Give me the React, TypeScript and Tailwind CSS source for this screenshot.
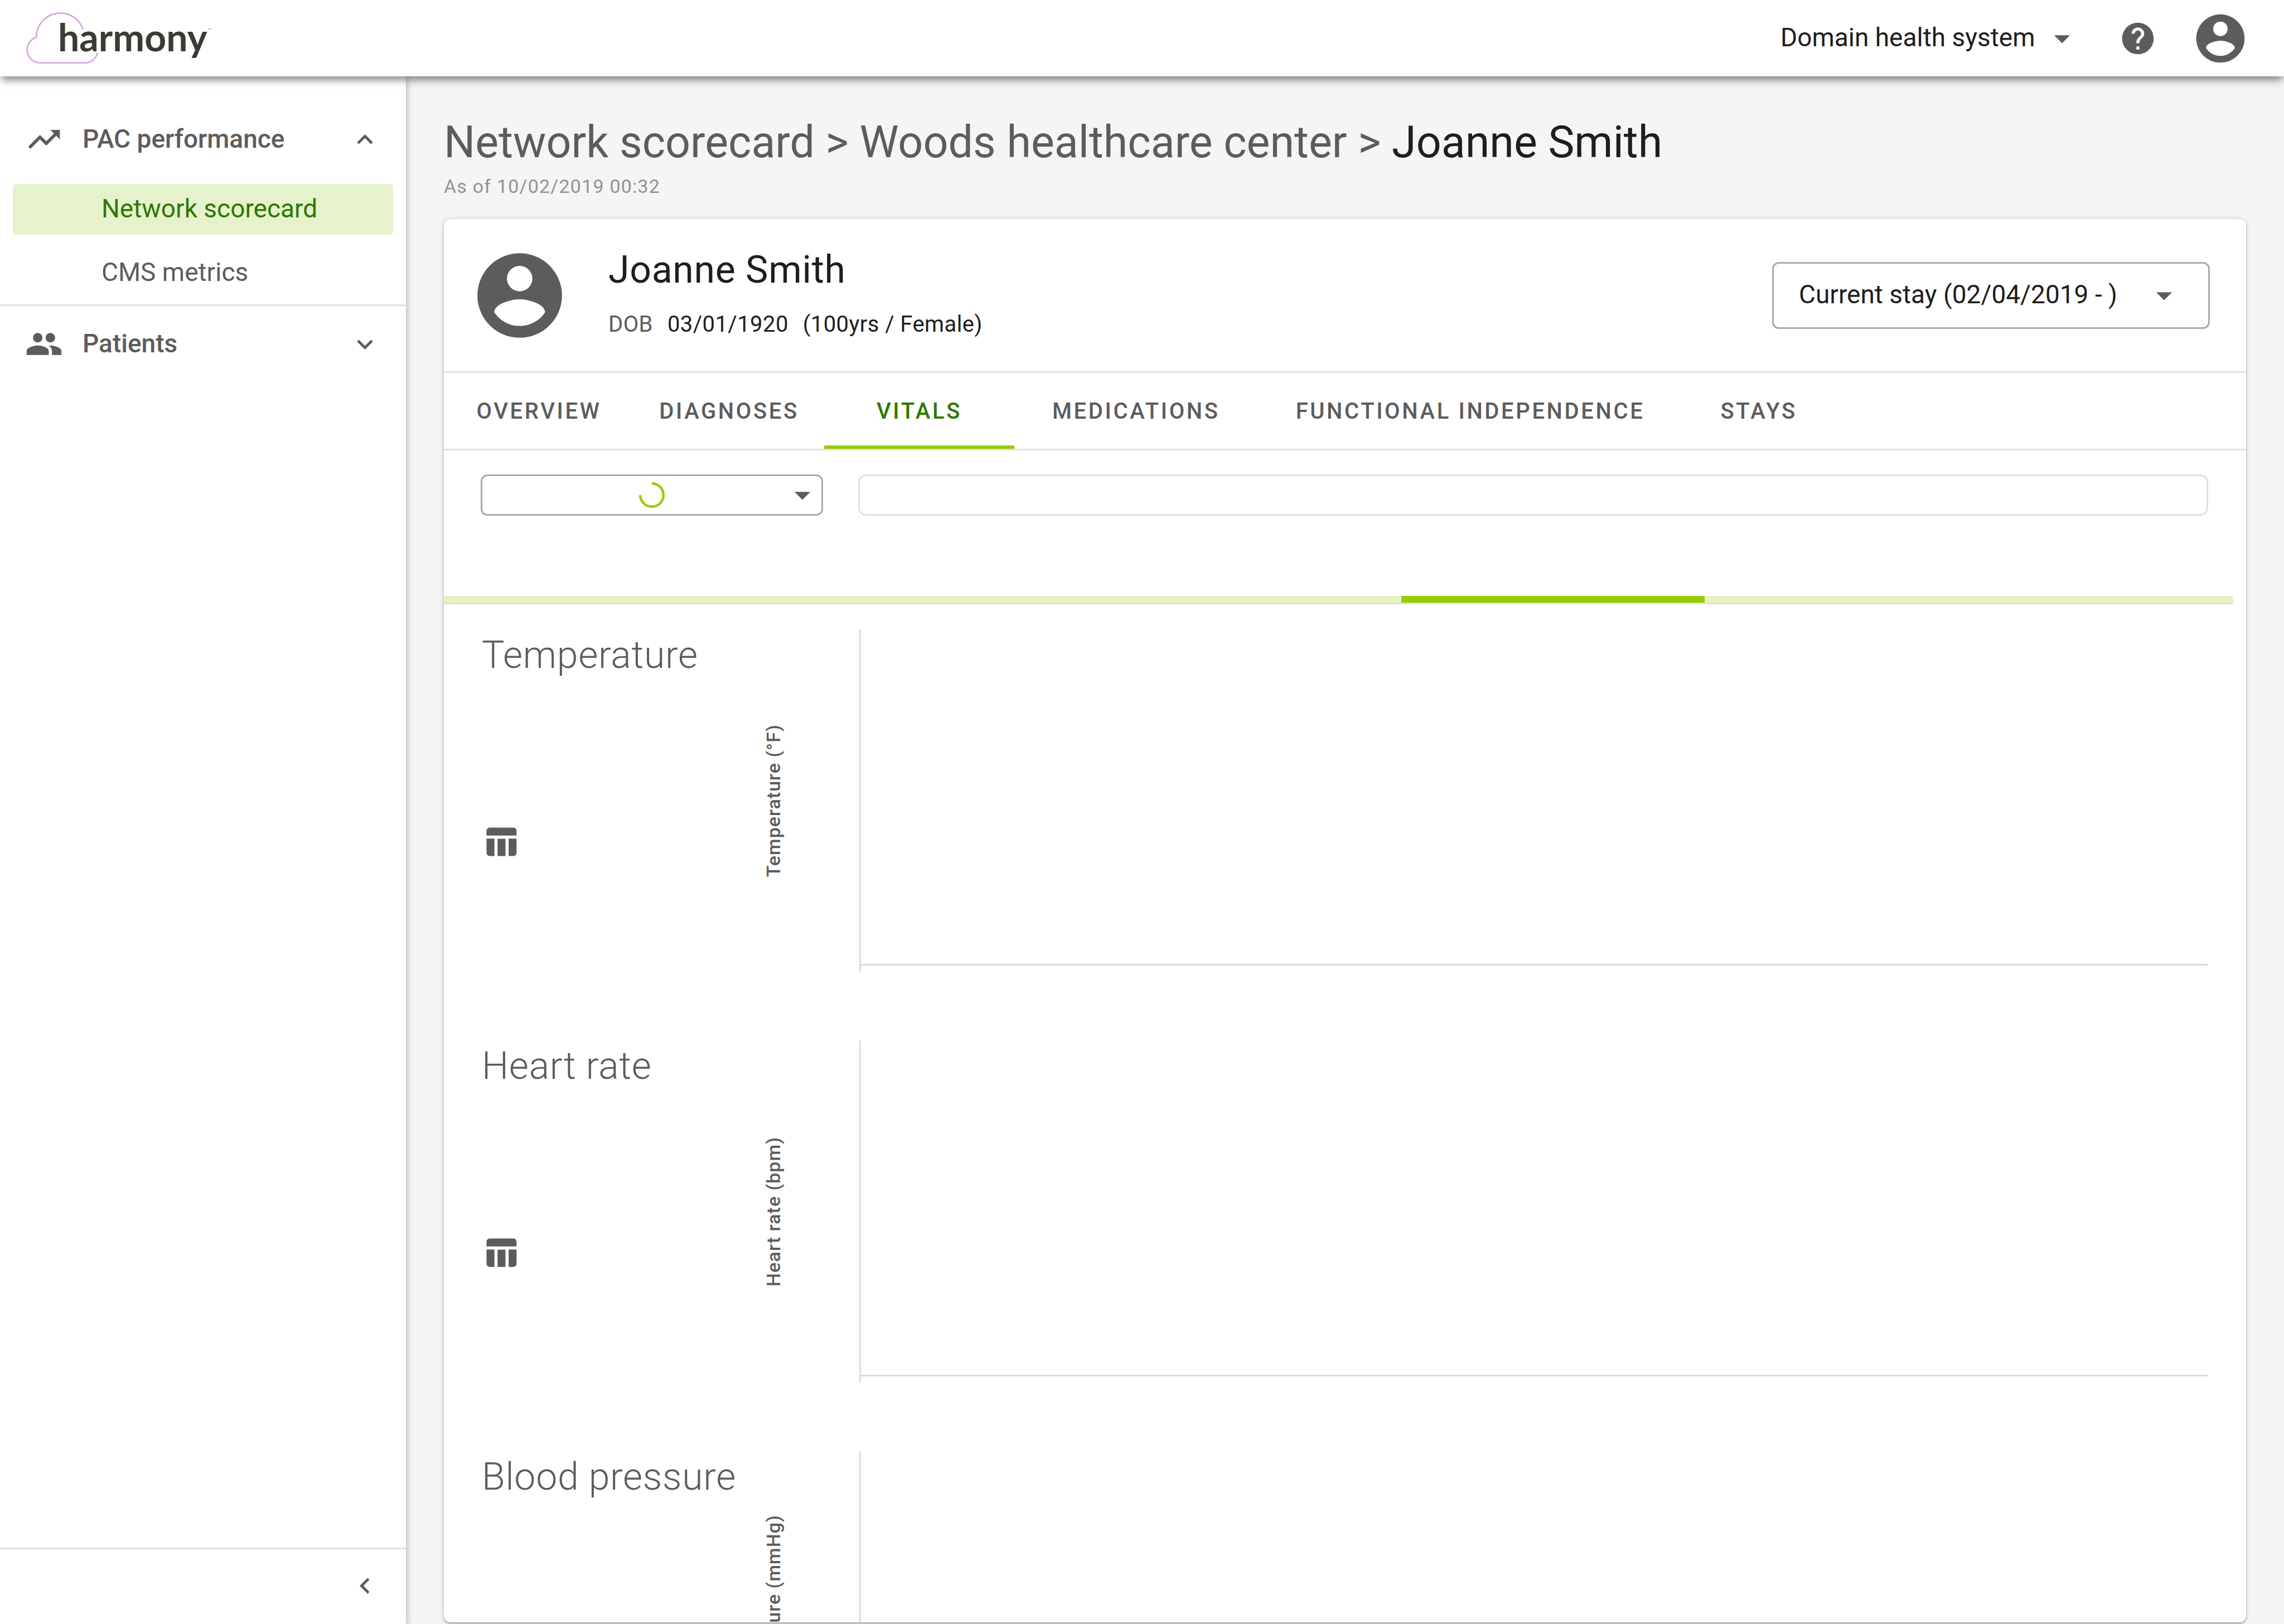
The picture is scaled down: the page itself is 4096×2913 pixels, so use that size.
import type { ReactNode } from "react";

type IconProps = { d: string; className: string };

function Icon({ d, className }: IconProps) {
  return (
    <svg viewBox="0 0 24 24" fill="currentColor" aria-hidden="true" className={className}>
      <path d={d} />
    </svg>
  );
}

const paths = {
  account:
    "M12 2C6.48 2 2 6.48 2 12s4.48 10 10 10 10-4.48 10-10S17.52 2 12 2zm0 3c1.66 0 3 1.34 3 3s-1.34 3-3 3-3-1.34-3-3 1.34-3 3-3zm0 14.2c-2.5 0-4.71-1.28-6-3.22.03-1.99 4-3.08 6-3.08 1.99 0 5.97 1.09 6 3.08-1.29 1.94-3.5 3.22-6 3.22z",
  help: "M12 2C6.48 2 2 6.48 2 12s4.48 10 10 10 10-4.48 10-10S17.52 2 12 2zm1 17h-2v-2h2v2zm2.07-7.75l-.9.92C13.45 12.9 13 13.5 13 15h-2v-.5c0-1.1.45-2.1 1.17-2.83l1.24-1.26c.37-.36.59-.86.59-1.41 0-1.1-.9-2-2-2s-2 .9-2 2H8c0-2.21 1.79-4 4-4s4 1.79 4 4c0 .88-.36 1.68-.93 2.25z",
  dropDown: "M7 10l5 5 5-5z",
  trendingUp: "M16 6l2.29 2.29-4.88 4.88-4-4L2 16.59 3.41 18l6-6 4 4 6.3-6.29L22 12V6z",
  people:
    "M16 11c1.66 0 2.99-1.34 2.99-3S17.66 5 16 5c-1.66 0-3 1.34-3 3s1.34 3 3 3zm-8 0c1.66 0 2.99-1.34 2.99-3S9.66 5 8 5C6.34 5 5 6.34 5 8s1.34 3 3 3zm0 2c-2.33 0-7 1.17-7 3.5V19h14v-2.5c0-2.33-4.67-3.5-7-3.5zm8 0c-.29 0-.62.02-.97.05 1.16.84 1.97 1.97 1.97 3.45V19h6v-2.5c0-2.33-4.67-3.5-7-3.5z",
  expandLess: "M12 8l-6 6 1.41 1.41L12 10.83l4.59 4.58L18 14z",
  expandMore: "M16.59 8.59L12 13.17 7.41 8.59 6 10l6 6 6-6z",
  chevronLeft: "M15.41 7.41L14 6l-6 6 6 6 1.41-1.41L10.83 12z",
  table:
    "M10 10.02h5V21h-5zM17 21h3c1.1 0 2-.9 2-2v-9h-5v11zm3-18H5c-1.1 0-2 .9-2 2v3h19V5c0-1.1-.9-2-2-2zM3 19c0 1.1.9 2 2 2h3V10H3v9z",
};

function Logo() {
  return (
    <a href="#home" aria-label="harmony" className="block">
      <svg viewBox="0 0 354 100" className="h-[100px] w-[354px]">
        <path
          d="M104.200 33.600 A43.300 43.300 0 0 0 20 47.900 A23.500 23.500 0 0 0 24.500 93.700 H108 A23.500 23.500 0 0 0 130 75.700"
          fill="none"
          stroke="#d6a3e0"
          strokeWidth="2.600"
        />
        <text x="59" y="73" fill="#3b3b34" className="font-['Lato'] text-[68px] font-bold">
          harmony
        </text>
        <text x="328" y="38" fill="#8a8a86" className="font-['Lato'] text-[8px]">
          ™
        </text>
      </svg>
    </a>
  );
}

function Header() {
  return (
    <header className="relative z-20 flex h-[137px] shrink-0 items-center bg-white pl-[45px] pr-[62px] shadow-[0_9px_14px_-3px_rgba(0,0,0,0.5)]">
      <Logo />
      <div className="relative ml-auto mr-[68px] flex items-center">
        <select
          aria-label="Organization"
          className="appearance-none bg-transparent pb-1 pr-[82px] text-[46px] leading-[60px] text-[#1e1e1e]"
        >
          <option>Domain health system</option>
        </select>
        <Icon d={paths.dropDown} className="pointer-events-none absolute right-0 size-[68px]" />
      </div>
      <button type="button" aria-label="Help" className="mr-[62px]">
        <Icon d={paths.help} className="size-[68px]" />
      </button>
      <button type="button" aria-label="Account">
        <Icon d={paths.account} className="size-[104px]" />
      </button>
    </header>
  );
}

function NavGroup({ icon, label, open }: { icon: string; label: string; open: boolean }) {
  return (
    <button
      type="button"
      aria-expanded={open}
      className="flex h-[136px] w-full items-center px-[45px] text-[46px] font-medium leading-[60px]"
    >
      <Icon d={icon} className="mr-[35px] size-[68px]" />
      <span className="pb-[2px]">{label}</span>
      <Icon d={open ? paths.expandLess : paths.expandMore} className="ml-auto size-[57px]" />
    </button>
  );
}

function Sidebar() {
  return (
    <aside className="relative z-10 flex w-[728px] shrink-0 flex-col bg-white shadow-[0_3px_12px_rgba(0,0,0,0.35)]">
      <nav className="flex-1 pt-[45px]">
        <NavGroup icon={paths.trendingUp} label="PAC performance" open />
        <ul className="flex flex-col gap-[23px] border-b-3 border-[#e0e0e0] px-[23px] pb-[11px] pt-[12px] text-[46px] leading-[60px]">
          <li>
            <a
              href="#scorecard"
              aria-current="page"
              className="flex h-[91px] items-center rounded-[6px] bg-[#e6f2cc] pb-1 pl-[159px] text-[#2d7800]"
            >
              Network scorecard
            </a>
          </li>
          <li>
            <a href="#cms" className="flex h-[91px] items-center pb-1 pl-[159px]">
              CMS metrics
            </a>
          </li>
        </ul>
        <NavGroup icon={paths.people} label="Patients" open={false} />
      </nav>
      <div className="flex h-[137px] items-center justify-end border-t-3 border-[#e0e0e0] pb-[3px] pr-[45px]">
        <button type="button" aria-label="Collapse menu">
          <Icon d={paths.chevronLeft} className="size-[57px]" />
        </button>
      </div>
    </aside>
  );
}

function PatientHeader() {
  return (
    <div className="flex h-[276px] shrink-0 items-center border-b-3 border-[#e0e0e0] pl-[45px] pr-[65px]">
      <Icon d={paths.account} className="mr-[68px] size-[182px]" />
      <div className="flex flex-col gap-[24px] pb-[12px] text-[#1e1e1e]">
        <h2 className="text-[68px] leading-[92px] tracking-[0.01em]">Joanne Smith</h2>
        <p className="flex gap-[26px] text-[40px] leading-[56px] tracking-[0.01em]">
          <span className="text-[#5c5c5c]">DOB</span>
          <span>03/01/1920</span>
          <span>(100yrs / Female)</span>
        </p>
      </div>
      <div className="relative ml-auto flex items-center">
        <select
          aria-label="Stay"
          className="h-[120px] w-[785px] appearance-none rounded-[12px] border-3 border-[#aaaaaa] bg-white pb-1 pl-[45px] text-[46px] leading-[60px] text-[#1e1e1e]"
        >
          <option>Current stay (02/04/2019 - )</option>
        </select>
        <Icon d={paths.dropDown} className="pointer-events-none absolute right-[48px] size-[68px]" />
      </div>
    </div>
  );
}

function Tab({ children, selected = false, wide = false }: { children: ReactNode; selected?: boolean; wide?: boolean }) {
  return (
    <button
      type="button"
      role="tab"
      aria-selected={selected}
      className={
        (wide ? "w-[341px] " : "px-[68px] ") +
        (selected ? "border-[#96cc00] text-[#2d7800] " : "border-transparent ") +
        "border-b-6 pt-[8px] text-[40px] font-medium leading-[56px] tracking-[0.09em]"
      }
    >
      {children}
    </button>
  );
}

function Tabs() {
  return (
    <div role="tablist" aria-label="Patient record" className="flex h-[139px] shrink-0 border-b-3 border-[#e0e0e0]">
      <Tab wide>OVERVIEW</Tab>
      <Tab wide>DIAGNOSES</Tab>
      <Tab wide selected>
        VITALS
      </Tab>
      <Tab>MEDICATIONS</Tab>
      <Tab>FUNCTIONAL INDEPENDENCE</Tab>
      <Tab>STAYS</Tab>
    </div>
  );
}

function Toolbar() {
  return (
    <div className="flex h-[261px] shrink-0 items-start gap-[63px] pl-[66px] pr-[68px] pt-[43px]">
      <div className="relative flex h-[74px] w-[614px] shrink-0 items-center justify-center">
        <select
          aria-label="Time range"
          aria-busy="true"
          className="absolute inset-0 appearance-none rounded-[12px] border-3 border-[#aaaaaa] bg-white"
        />
        <svg viewBox="0 0 46 46" aria-hidden="true" className="relative size-[46px]">
          <path d="M23 2.200 A20.800 20.800 0 1 1 2.200 23" fill="none" stroke="#96cc00" strokeWidth="4.400" />
        </svg>
        <Icon d={paths.dropDown} className="pointer-events-none absolute right-[3px] size-[68px]" />
      </div>
      <input
        type="text"
        readOnly
        aria-label="Date range"
        className="h-[74px] min-w-0 flex-1 rounded-[14px] border-3 border-[#e0e0e0] bg-white"
      />
    </div>
  );
}

function Chart({ title, axis }: { title: string; axis: string }) {
  return (
    <section className="mb-[123px] flex h-[614px] shrink-0 px-[68px]">
      <div className="flex w-[503px] shrink-0 flex-col items-start">
        <h3 className="whitespace-nowrap pt-[6px] text-[68px] font-light leading-[80px] tracking-[0.01em]">{title}</h3>
        <button type="button" aria-label={"Show " + title + " as table"} className="mt-[261px]">
          <Icon d={paths.table} className="size-[68px]" />
        </button>
      </div>
      <div className="flex w-[174px] shrink-0 items-center">
        <span className="rotate-180 whitespace-nowrap text-[34px] font-medium leading-[40px] tracking-[0.03em] [writing-mode:vertical-rl]">
          {axis}
        </span>
      </div>
      <div className="flex-1 border-l-3 border-[#dcdcdc]">
        <div className="h-[603px] border-b-3 border-[#dcdcdc]" />
      </div>
    </section>
  );
}

export default function App() {
  return (
    <div className="flex h-screen flex-col overflow-hidden bg-[#f5f5f5] font-['Roboto',sans-serif] text-[#5c5c5c]">
      <Header />
      <div className="flex min-h-0 flex-1">
        <Sidebar />
        <main className="flex min-w-0 flex-1 flex-col px-[68px] pb-[3px]">
          <h1 className="pt-[64px] text-[79px] leading-[108px]">
            <a href="#scorecard">Network scorecard</a> &gt; <a href="#center">Woods healthcare center</a> &gt;{" "}
            <span className="text-[#1e1e1e]">Joanne Smith</span>
          </h1>
          <p className="pb-[35px] pt-px text-[34px] leading-[48px] tracking-[0.035em] text-[#929292]">
            As of 10/02/2019 00:32
          </p>
          <div className="flex min-h-0 flex-1 flex-col overflow-hidden rounded-[12px] bg-white shadow-[0_3px_3px_rgba(0,0,0,0.2),0_1px_8px_rgba(0,0,0,0.2)]">
            <PatientHeader />
            <Tabs />
            <div className="flex min-h-0 flex-1 flex-col overflow-hidden">
              <Toolbar />
              <div className="mr-[23px] shrink-0 border-b-3 border-[#e0e0e0]">
                <div role="progressbar" aria-label="Loading vitals" className="h-[12px] bg-[#e6f2c3] pl-[53.5%]">
                  <div className="h-full w-[36.5%] bg-[#96cc00]" />
                </div>
              </div>
              <div className="flex flex-col pt-[45px]">
                <Chart title="Temperature" axis="Temperature (°F)" />
                <Chart title="Heart rate" axis="Heart rate (bpm)" />
                <Chart title="Blood pressure" axis="Blood pressure (mmHg)" />
              </div>
            </div>
          </div>
        </main>
      </div>
    </div>
  );
}
